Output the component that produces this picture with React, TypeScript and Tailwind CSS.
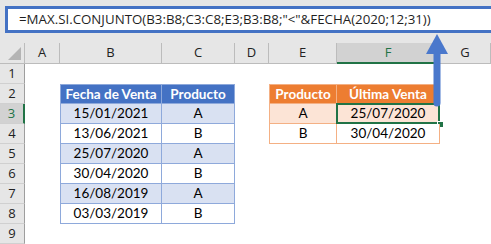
import React from 'react'

const columns = ['A', 'B', 'C', 'D', 'E', 'F', 'G']

const sales = [
  ['15/01/2021', 'A'],
  ['13/06/2021', 'B'],
  ['25/07/2020', 'A'],
  ['30/04/2020', 'B'],
  ['16/08/2019', 'A'],
  ['03/03/2019', 'B'],
]

const lastSales = [
  ['A', '25/07/2020'],
  ['B', '30/04/2020'],
]

const uiFont = { fontFamily: '"Open Sans", "Noto Sans", sans-serif' }
const cellFont = { fontFamily: 'Lato, "Open Sans", sans-serif' }

function Cell({ row, col }: { row: number; col: number }) {
  // sales table lives in B2:C8
  if ((col === 1 || col === 2) && row >= 2 && row <= 8) {
    const edge = col === 1 ? 'border-l' : ''
    if (row === 2) {
      return (
        <div style={cellFont} className={`flex items-center justify-center whitespace-nowrap bg-[#4472c4] border-t border-r border-b border-[#8ea9db] text-white font-bold text-[13.5px] ${edge}`}>
          {col === 1 ? 'Fecha de Venta' : 'Producto'}
        </div>
      )
    }
    const band = row % 2 === 1 ? 'bg-[#d9e1f2]' : 'bg-white'
    return (
      <div style={cellFont} className={`flex items-center justify-center whitespace-nowrap border-r border-b border-[#8ea9db] text-[13.5px] text-black ${band} ${edge}`}>
        {sales[row - 3][col - 1]}
      </div>
    )
  }

  // lookup table lives in E2:F4
  if ((col === 4 || col === 5) && row >= 2 && row <= 4) {
    const edge = col === 4 ? 'border-l' : ''
    if (row === 2) {
      return (
        <div style={cellFont} className={`flex items-center justify-center whitespace-nowrap bg-[#ed7d31] border-t border-r border-b border-[#f4b084] text-white font-bold text-[13.5px] ${edge}`}>
          {col === 4 ? 'Producto' : 'Última Venta'}
        </div>
      )
    }
    const band = row === 3 ? 'bg-[#fce4d6]' : 'bg-white'
    return (
      <div style={cellFont} className={`relative flex items-center justify-center whitespace-nowrap border-r border-b border-[#f4b084] text-[13.5px] text-black ${band} ${edge}`}>
        {lastSales[row - 3][col - 4]}
        {row === 3 && col === 5 && (
          <>
            <div className="absolute -left-px -top-px -right-px -bottom-px border-2 border-[#217346]" />
            <div className="absolute -right-[5px] -bottom-[5px] w-[7px] h-[7px] bg-[#217346] border border-white" />
          </>
        )}
      </div>
    )
  }

  return <div className="bg-white" />
}

export default function App() {
  const rows = [1, 2, 3, 4, 5, 6, 7, 8, 9]

  return (
    <div className="relative w-[491px] h-[244px] overflow-hidden bg-white" style={uiFont}>
      {/* formula bar */}
      <div className="h-[43px] bg-[#e6e6e6] pt-[6px] pl-[5px]">
        <div className="h-[27px] w-[490px] border-[3px] border-[#4472c4] bg-white flex items-center pl-[11px] text-[13.3px] text-[#1f1f1f] whitespace-nowrap">
          =MAX.SI.CONJUNTO(B3:B8;C3:C8;E3;B3:B8;"&lt;"&amp;FECHA(2020;12;31))
        </div>
      </div>

      {/* sheet */}
      <div className="grid grid-cols-[25px_35px_102px_73px_34px_68px_103px_1fr] grid-rows-[21px_repeat(9,20px)]">
        <div className="relative bg-[#e6e6e6] border-b border-r border-[#bcbcbc]">
          <div className="absolute right-[3px] bottom-[3px] w-0 h-0 border-l-[13px] border-l-transparent border-b-[13px] border-b-[#b4b4b4]" />
        </div>
        {columns.map((c) =>
          c === 'F' ? (
            <div key={c} className="flex items-center justify-center bg-[#d2d2d2] border-r border-[#bcbcbc] border-b-2 border-b-[#217346] text-[13px] text-[#217346]">
              {c}
            </div>
          ) : (
            <div key={c} className="flex items-center justify-center bg-[#e6e6e6] border-r border-b border-[#bcbcbc] text-[13px] text-[#222]">
              {c}
            </div>
          )
        )}

        {rows.map((r) => (
          <React.Fragment key={r}>
            {r === 3 ? (
              <div className="flex items-center justify-center bg-[#d2d2d2] border-b border-[#d0d0d0] border-r-2 border-r-[#217346] text-[13px] text-[#217346]">
                {r}
              </div>
            ) : (
              <div className="flex items-center justify-center bg-[#e6e6e6] border-b border-[#d0d0d0] border-r border-r-[#9e9e9e] text-[13px] text-[#222]">
                {r}
              </div>
            )}
            {columns.map((_, ci) => (
              <Cell key={ci} row={r} col={ci} />
            ))}
          </React.Fragment>
        ))}
      </div>

      {/* arrow from the result cell up to the formula */}
      <svg className="absolute left-[425px] top-[34px]" width="24" height="74" viewBox="0 0 24 74">
        <polygon points="12,0 1,20 23,20" fill="#4a78cc" />
        <path d="M8.5 19 H15.5 V69 a3.5 3.5 0 0 1 -7 0 Z" fill="#4a78cc" />
      </svg>
    </div>
  )
}
